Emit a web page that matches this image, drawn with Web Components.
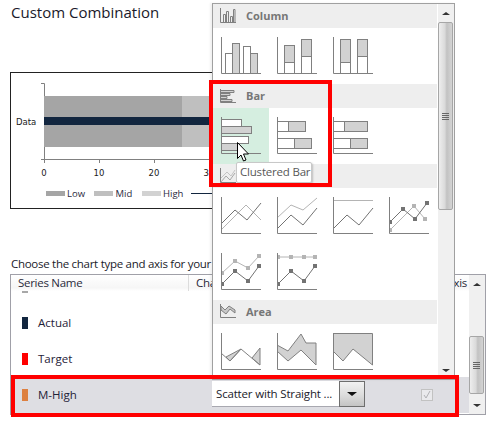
<!DOCTYPE html>
<html lang="en"><head><meta charset="utf-8"><title>Custom Combination</title>
<style>
html,body{margin:0;padding:0;background:#fff}
body{font-family:"Open Sans","Noto Sans",sans-serif}
</style></head><body>
<x-app>
  <x-chart></x-chart>
  <x-series-table>
    <x-series-row name="50%" color="#a8a8a8"></x-series-row>
    <x-series-row name="Actual" color="#12263f"></x-series-row>
    <x-series-row name="Target" color="#ff0000"></x-series-row>
    <x-series-row name="M-High" color="#dd8040" selected></x-series-row>
  </x-series-table>
  <x-picker slot="over">
    <x-section title="Column" icon="column">
      <x-thumb kind="col1"></x-thumb><x-thumb kind="col2"></x-thumb><x-thumb kind="col3"></x-thumb>
    </x-section>
    <x-section title="Bar" icon="bar">
      <x-thumb kind="bar1" hot></x-thumb><x-thumb kind="bar2"></x-thumb><x-thumb kind="bar3"></x-thumb>
    </x-section>
    <x-section title="" icon="line">
      <x-thumb kind="line1"></x-thumb><x-thumb kind="line2"></x-thumb><x-thumb kind="line3"></x-thumb><x-thumb kind="line4"></x-thumb>
      <x-thumb kind="line5"></x-thumb><x-thumb kind="line6"></x-thumb>
    </x-section>
    <x-section title="Area" icon="area">
      <x-thumb kind="area1"></x-thumb><x-thumb kind="area2"></x-thumb><x-thumb kind="area3"></x-thumb>
    </x-section>
  </x-picker>
  <x-tip slot="over">Clustered Bar</x-tip>
  <x-cursor slot="over"></x-cursor>
  <x-redbox slot="over" style="left:209px;top:80px;width:115px;height:99px"></x-redbox>
  <x-redbox slot="over" style="left:11px;top:375px;width:440px;height:34px"></x-redbox>
</x-app>
<script>
const FONT='"Open Sans","Noto Sans",sans-serif';
function def(name,css,html,init){
  customElements.define(name,class extends HTMLElement{
    connectedCallback(){
      if(this.shadowRoot)return;
      const r=this.attachShadow({mode:'open'});
      r.innerHTML='<style>'+css+'</style>'+(typeof html==='function'?html(this):html);
      if(init)init(this,r);
    }
  });
}
const G='#808080',F='#d2d2d2',L='#b4b4b4',D='#737373';
const axis='<path d="M.5 0V36.5H40" fill="none" stroke="'+G+'"/>';
const r=(x,y,w,h,f)=>`<rect x="${x+.5}" y="${y+.5}" width="${w}" height="${h}" fill="${f}" stroke="${G}"/>`;
const pl=(p,c)=>`<polyline points="${p}" fill="none" stroke="${c}"/>`;
const mk=(p,c)=>p.split(' ').map(q=>{const [x,y]=q.split(',').map(Number);return `<rect x="${x-2}" y="${y-2}" width="4" height="4" fill="${c}"/>`}).join('');
const pg=(p)=>`<polygon points="${p}" fill="${F}" stroke="${G}"/>`;
const W='#fff';
const thumbs={
 col1:r(4,16,7,20,'none')+r(11,6,7,30,F)+r(22,9,7,27,'none')+r(29,16,7,20,F),
 col2:r(7,8,10,17,F)+r(7,25,10,11,'none')+r(24,2,10,17,F)+r(24,19,10,17,'none'),
 col3:r(7,2,10,23,F)+r(7,25,10,11,'none')+r(24,2,10,17,F)+r(24,19,10,17,'none'),
 bar1:r(0,2,20,7,W)+r(0,9,30,7,F)+r(0,19,27,7,W)+r(0,26,17,7,F),
 bar2:r(0,4,11,10,W)+r(11,4,17,10,F)+r(0,21,17,10,W)+r(17,21,17,10,F),
 bar3:r(0,4,11,10,W)+r(11,4,23,10,F)+r(0,21,17,10,W)+r(17,21,17,10,F),
 line1:pl('0,33 25,8 40,23',L)+pl('0,27 14,13 26,23 40,6',D),
 line2:pl('0,21 14,8 26,13 40,1',L)+pl('0,32 14,18 26,28 40,11',D),
 line3:pl('0,3.5 40,3.5',L)+pl('0,32 14,18 26,28 40,11',D),
 line4:pl('1,33 25,9 36,22',L)+mk('1,33 25,9 36,22',L)+pl('1,25 14,12 26,22 38,6',D)+mk('1,25 14,12 26,22 38,6',D),
 line5:pl('1,20 14,8 27,15 38,3',L)+mk('1,20 14,8 27,15 38,3',L)+pl('1,31 14,18 27,28 38,13',D)+mk('1,31 14,18 27,28 38,13',D),
 line6:pl('1,4 39,4',L)+mk('1,4 14,4 27,4 38,4',L)+pl('1,31 14,18 27,28 38,13',D)+mk('1,31 14,18 27,28 38,13',D),
 area1:pg('5,24 20,16 9,28')+pg('31,25 39,15 39,32')+pl('0,20 9,28 20,16 39,32',G),
 area2:pg('0,12 11,18 24,1 29,10 39,10 39,32 24,17 11,28 0,18'),
 area3:pg('0,.5 39.5,.5 39.5,32 20,16 10,28 0,18')
};
const headIcons={
 column:'<path d="M.5 0V14.5H16" fill="none" stroke="#808080"/><path d="M3.5 14V6.500H5.500V14M6.500 14V3.500H8.500V14M10.500 14V8.500H12.500V14M13.500 14V1.500H15V14" fill="none" stroke="#808080"/>',
 bar:'<path d="M.5 1V14.5H16" fill="none" stroke="#808080"/><path d="M1 2.500H14V4.500H1M1 5.500H10V7.500H1M1 8.500H7V10.500H1M1 11.500H12V13.500H1" fill="#d2d2d2" stroke="#808080"/>',
 line:'<path d="M.5 0V14.5H16" fill="none" stroke="#808080"/><path d="M1 14L6 8L10 12L15 5" fill="none" stroke="#a8a8a8"/><path d="M1 10L7 4L11 8L15 2" fill="none" stroke="#c4c4c4"/>',
 area:'<path d="M.5 0V13.500H16" fill="none" stroke="#808080"/><path d="M1 2L5 6L9 2L15 6V9L10 5L6 10L1 6Z" fill="#c8c8c8" stroke="#808080"/>'
};

def('x-app',
 `:host{display:block;position:relative;width:487px;height:421px;overflow:hidden;background:#fff;color:#1a1a2a;font:12px ${FONT}}
  .main{display:flex;flex-direction:column;padding:2px 1px 0 10px;box-sizing:border-box;height:421px}
  h1{margin:0 0 0 1px;font:400 15px/21px ${FONT};height:21px;letter-spacing:0}
  p{margin:0;font:11.5px/16px ${FONT};height:16px;white-space:nowrap;padding-left:1px;letter-spacing:-.28px}
  .chart{margin-top:49px;display:block}
  .choose{margin-top:47px;margin-bottom:2px}`,
 `<div class="main"><h1>Custom Combination</h1>
  <div class="chart"><slot name="c"></slot></div>
  <p class="choose">Choose the chart type and axis for your data series:</p>
  <slot></slot></div><slot name="over"></slot>`,
 (h)=>{h.querySelector('x-chart').slot='c';}
);

def('x-chart',
 `:host{display:block;width:290px;height:137px;box-sizing:border-box;border:1px solid #222;background:#fff}
  svg{display:block}
  text{font:8.5px "DejaVu Sans",sans-serif;fill:#1a1a1a}
  .lg{font:9.5px ${FONT};fill:#2a2a40}`,
 `<svg width="288" height="135" viewBox="11 73 288 135">
   <path d="M41 83.500H44.500V159.500M41 159.500H254M44.500 159.500V163M99.500 159.500V163M154.500 159.500V163M209.500 159.500V163" fill="none" stroke="#808080"/>
   <rect x="44" y="96" width="138" height="51" fill="#a5a5a5"/>
   <rect x="182" y="96" width="60" height="51" fill="#bfbfbf"/>
   <rect x="44" y="117" width="190" height="8" fill="#12263f"/>
   <text x="16" y="125">Data</text>
   <text x="44" y="176" text-anchor="middle">0</text><text x="99" y="176" text-anchor="middle">10</text>
   <text x="154" y="176" text-anchor="middle">20</text><text x="209" y="176" text-anchor="middle">30</text>
   <rect x="46" y="191" width="19" height="5" fill="#a5a5a5"/><text class="lg" x="67" y="197">Low</text>
   <rect x="94" y="191" width="19" height="5" fill="#bfbfbf"/><text class="lg" x="115.500" y="197">Mid</text>
   <rect x="142" y="191" width="19" height="5" fill="#d2d2d2"/><text class="lg" x="163" y="197">High</text>
   <rect x="191" y="193" width="30" height="1" fill="#12263f"/>
  </svg>`);

def('x-series-table',
 `:host{display:block;width:476px;height:141px;box-sizing:border-box;border:1px solid #a0a0a8;background:#fff}
  .wrap{display:flex;height:100%}
  .content{flex:1;min-width:0;display:flex;flex-direction:column;overflow:hidden}
  .head{position:relative;z-index:1;flex:none;height:16px;display:grid;grid-template-columns:177px 1fr auto;background:linear-gradient(#fff,#f6f6f6 80%,#fff);font:11.5px/16px ${FONT};color:#2a2a3a;letter-spacing:-.28px}
  .head span{padding-left:7px;white-space:nowrap}
  .head .c{border-left:1px solid #dcdcdc}
  .head .a{padding-right:2px}
  .rows{flex:1;overflow:hidden}
  ::slotted(x-series-row:first-child){margin-top:-22px}`,
 `<div class="wrap"><div class="content">
   <div class="head"><span>Series Name</span><span class="c">Chart Type</span><span class="a">Secondary Axis</span></div>
   <div class="rows"><slot></slot></div>
  </div><x-scrollbar thumb-top="43" thumb-h="58"></x-scrollbar></div>`);

def('x-series-row',
 `:host{display:grid;grid-template-columns:201px 153px 56px 12px 1fr;height:36px;align-items:center;color:#1f2238;font:11.5px ${FONT}}
  :host([selected]){background:#dedee3}
  .n{display:flex;align-items:center;gap:10px;padding-left:11px}
  .n span{position:relative;margin-top:-2px}
  i{display:block;width:6px;height:12px}
  .cell{grid-column:2;align-self:start}
  .ck{grid-column:4}`,
 (h)=>`<div class="n"><i style="background:${h.getAttribute('color')}"></i><span>${h.getAttribute('name')}</span></div>`+
   (h.hasAttribute('selected')?`<x-combo class="cell">Scatter with Straight ...</x-combo><x-check class="ck"></x-check>`:''));

def('x-combo',
 `:host{display:flex;margin-top:4px;height:26px;box-sizing:border-box;background:#fff;border-bottom:1px solid #a8a8b0;font:11.5px/26px ${FONT};color:#1a1a2a;white-space:nowrap;position:relative;z-index:2}
  .t{width:127px;padding-left:4px;box-sizing:border-box;overflow:hidden;letter-spacing:-.17px}
  .b{width:26px;box-sizing:border-box;border:1px solid #6e6e6e;background:linear-gradient(#f2f2f2,#dcdcdc 55%,#c4c4c4);display:flex;align-items:center;justify-content:center;margin-bottom:-1px}
  .b i{display:block;border:4px solid transparent;border-top:4px solid #111;border-bottom:0;border-left-width:5px;border-right-width:5px}`,
 `<div class="t"><slot></slot></div><div class="b"><i></i></div>`);

def('x-check',
 `:host{display:block;width:12px;height:12px;box-sizing:border-box;border:1px solid #c2c2c2;background:#e9e9ec;margin-top:0}
  svg{display:block}`,
 `<svg width="10" height="10"><path d="M2 5L4 8L8 1" fill="none" stroke="#b0b0b4"/></svg>`);

def('x-scrollbar',
 `:host{display:flex;flex-direction:column;width:16px;flex:none;background:#f0f0f0}
  .btn{height:18px;flex:none;display:flex;align-items:center;justify-content:center}
  .btn i{display:block;border:3px solid transparent;border-left-width:4px;border-right-width:4px}
  .up i{border-bottom:3px solid #333;border-top:0}
  .dn i{border-top:3px solid #333;border-bottom:0}
  .track{flex:1;min-height:0}
  .th{box-sizing:border-box;width:15px;margin-left:0;border:1px solid #a6a6a6;border-radius:2px;background:linear-gradient(90deg,#eee,#dadada 45%,#c2c2c2 60%,#d4d4d4);display:flex;flex-direction:column;align-items:center;justify-content:center;gap:1px}
  .th b{display:block;width:7px;height:1px;background:#666}`,
 (h)=>`<div class="btn up"><i></i></div><div class="track"><div class="th" style="margin-top:${h.getAttribute('thumb-top')}px;height:${h.getAttribute('thumb-h')}px"><b></b><b></b><b></b><b></b></div></div><div class="btn dn"><i></i></div>`);

def('x-picker',
 `:host{position:absolute;left:212px;top:3px;width:243px;height:377px;box-sizing:border-box;border:1px solid #a0a0a0;background:#fff;display:flex;z-index:1;box-shadow:-2px 0 2px rgba(0,0,0,.06)}
  .m{flex:1;min-width:0;overflow:hidden;padding-right:1px;box-sizing:border-box}`,
 `<div class="m"><slot></slot></div><x-scrollbar thumb-top="0" thumb-h="188"></x-scrollbar>`);

def('x-section',
 `:host{display:block}
  .h{height:24px;background:#eeeeee;display:flex;align-items:center;padding-left:7px;gap:10px;font:700 11px ${FONT};color:#767676}
  .h span{margin-top:-2px}
  svg{display:block;flex:none}
  .g{display:grid;grid-template-columns:repeat(4,56px);grid-auto-rows:56px}`,
 (h)=>`<div class="h"><svg width="16" height="16" viewBox="0 0 16 16">${headIcons[h.getAttribute('icon')]}</svg><span>${h.getAttribute('title')}</span></div><div class="g"><slot></slot></div>`);

def('x-thumb',
 `:host{display:block;padding:9px 0 0 8px;box-sizing:border-box}
  :host([hot]){background:#d5eee0}
  svg{display:block}`,
 (h)=>`<svg width="41" height="37" viewBox="0 0 41 37">${thumbs[h.getAttribute('kind')]}${axis}</svg>`);

def('x-tip',
 `:host{position:absolute;left:236px;top:162px;width:76px;height:21px;box-sizing:border-box;border:1px solid #c8c8c8;border-radius:2px;background:#fff;box-shadow:1px 1px 2px rgba(0,0,0,.2);font:11.5px/18px ${FONT};color:#575757;padding-left:3px;white-space:nowrap;z-index:3;letter-spacing:-.2px}`,
 `<slot></slot>`);

def('x-cursor',
 `:host{position:absolute;left:236px;top:141px;z-index:4;display:block;line-height:0}`,
 `<svg width="14" height="22" viewBox="0 0 14 22"><path d="M1.500 1.500V17.500L5 14L7.500 20L10 19L7.500 13H12.500Z" fill="#fff" stroke="#000"/></svg>`);

def('x-redbox',
 `:host{position:absolute;border:4px solid #ff0000;z-index:5;display:block}`,``);
</script>
</body></html>
